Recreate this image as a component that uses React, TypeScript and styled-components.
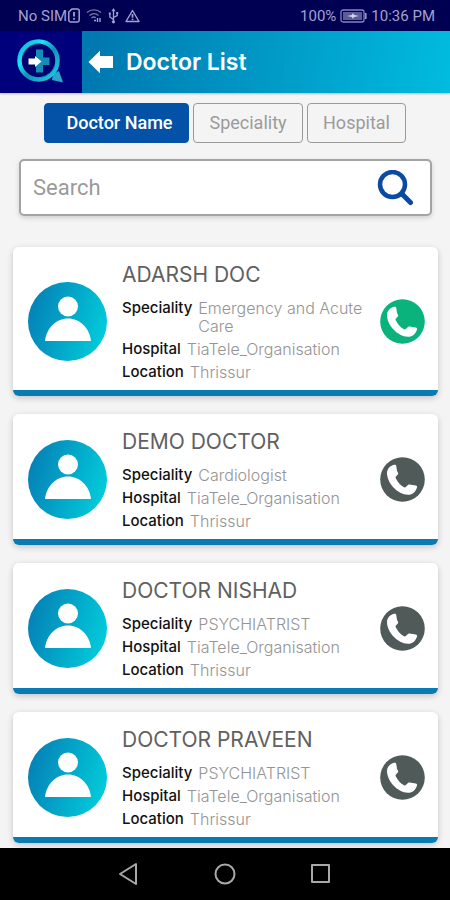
import React, { useState } from "react";
import styled, { createGlobalStyle } from "styled-components";

const GlobalStyle = createGlobalStyle`
  *, *::before, *::after { box-sizing: border-box; }
  body { margin: 0; background: #f4f4f4; }
  button, input { font: inherit; }
  h1, h2, p, dl, dd, dt, ul { margin: 0; padding: 0; }
  svg { display: block; flex: none; }
`;

const brandFont = `Inter, "Open Sans", sans-serif`;
const systemFont = `Roboto, "Liberation Sans", sans-serif`;

const Screen = styled.div`
  display: flex;
  flex-direction: column;
  min-height: 100vh;
  background: #f4f4f4;
  font-family: ${brandFont};
`;

const StatusBar = styled.div`
  display: flex;
  align-items: center;
  justify-content: space-between;
  height: 31px;
  padding: 0 15px 0 18px;
  background: #000052;
  color: #a3a1cf;
  font-family: ${systemFont};
  font-size: 15px;
  line-height: 20px;
`;

const StatusGroup = styled.div<{ $gap: number }>`
  display: flex;
  align-items: center;
  gap: ${(p) => p.$gap}px;
`;

const Header = styled.header`
  display: flex;
  height: 62px;
  background: linear-gradient(100deg, #0078b0 20%, #00bcde 100%);
  box-shadow: 0 1px 2px rgba(0, 0, 0, 0.25);
`;

const LogoTile = styled.div`
  display: flex;
  align-items: center;
  justify-content: center;
  width: 82px;
  background: #00007c;
`;

const BackButton = styled.button`
  display: flex;
  align-items: center;
  padding: 0 6px;
  border: 0;
  background: none;
  cursor: pointer;
`;

const Title = styled.h1`
  align-self: center;
  padding-left: 6px;
  color: #fff;
  font-size: 23px;
  font-weight: 600;
  line-height: 28px;
`;

const Tabs = styled.div`
  display: grid;
  grid-template-columns: 145fr 110fr 99fr;
  gap: 4px;
  margin: 10px 44px 0;
`;

const Tab = styled.button<{ $active: boolean }>`
  height: 40px;
  padding: ${(p) => (p.$active ? "0 0 0 6px" : "0")};
  border: 1px solid ${(p) => (p.$active ? "#0352a8" : "#999")};
  border-radius: 4px;
  background: ${(p) => (p.$active ? "#0352a8" : "transparent")};
  color: ${(p) => (p.$active ? "#fff" : "#9b9b9b")};
  font-family: ${systemFont};
  font-size: 18px;
  font-weight: ${(p) => (p.$active ? 500 : 400)};
  line-height: 20px;
  white-space: nowrap;
  cursor: pointer;
`;

const SearchBox = styled.form`
  display: flex;
  align-items: center;
  height: 57px;
  margin: 16px 18px 0 19px;
  padding: 0 17px 0 12px;
  border: 2px solid #a4a4a4;
  border-radius: 5px;
  background: #fff;
  box-shadow: 0 2px 5px rgba(0, 0, 0, 0.15);
`;

const SearchInput = styled.input`
  flex: 1;
  min-width: 0;
  padding: 0;
  border: 0;
  outline: 0;
  background: none;
  color: #444;
  font-family: ${systemFont};
  font-size: 22px;
  &::placeholder { color: #9a9a9a; opacity: 1; }
`;

const IconButton = styled.button`
  flex: none;
  padding: 0;
  border: 0;
  border-radius: 50%;
  background: none;
  cursor: pointer;
`;

const List = styled.ul`
  display: flex;
  flex: 1;
  flex-direction: column;
  gap: 18px;
  padding: 31px 12px 5px 13px;
  list-style: none;
`;

const Card = styled.li`
  display: flex;
  align-items: center;
  gap: 15px;
  padding: 14px 13px 15px 15px;
  border-radius: 6px;
  background: linear-gradient(to top, #087bb3 6px, #fff 6px);
  box-shadow: 0 2px 6px rgba(0, 0, 0, 0.2);
`;

const Info = styled.div`
  flex: 1;
  min-width: 0;
  padding-top: 2px;
`;

const DoctorName = styled.h2`
  margin-bottom: 12px;
  color: #606060;
  font-size: 21px;
  font-weight: 400;
  line-height: 24px;
`;

const Details = styled.dl`
  display: grid;
  gap: 5px;
`;

const Detail = styled.div`
  display: flex;
  gap: 6px;
  line-height: 18px;
`;

const Label = styled.dt`
  color: #111;
  font-size: 15px;
  font-weight: 500;
`;

const Value = styled.dd`
  min-width: 0;
  color: #949494;
  font-size: 16px;
  font-weight: 300;
`;

const NavBar = styled.nav`
  display: flex;
  align-items: center;
  justify-content: center;
  gap: 72px;
  height: 52px;
  background: #000;
`;

const SimIcon = () => (
  <svg width="12" height="15" viewBox="0 0 12 15" fill="none" stroke="#a3a1cf" strokeWidth="1.5">
    <path d="M4 1h5.5a1.7 1.7 0 0 1 1.7 1.7v9.6A1.7 1.7 0 0 1 9.5 14h-7A1.7 1.7 0 0 1 .8 12.300V4z" />
    <path d="M6 4v4.500M6 10v1.800" strokeWidth="1.800" />
  </svg>
);

const WifiIcon = () => (
  <svg width="16" height="15" viewBox="0 0 16 15" fill="none" stroke="#77759f" strokeWidth="1.400">
    <path d="M1 4.500C5 1 11 1 15 4.500M3.500 7.500c3-2.500 6-2.500 9 0M5.500 10c1.500-1.300 3-1.300 4.300-.2" />
    <path d="M8 12.500h2M11.500 10v4M14 10v4" stroke="#a3a1cf" />
  </svg>
);

const UsbIcon = () => (
  <svg width="11" height="16" viewBox="0 0 11 16" fill="none" stroke="#a3a1cf" strokeWidth="1.300">
    <path d="M5.500 2v11M5.500 11.500L1.800 9V6M5.500 9.500l3.700-2V5" />
    <path d="M5.500 0L3.500 3.200h4zM.8 4.500h2v2h-2zM8.200 4h2v2h-2z" fill="#a3a1cf" stroke="none" />
    <circle cx="5.500" cy="13.800" r="1.600" fill="#a3a1cf" stroke="none" />
  </svg>
);

const WarningIcon = () => (
  <svg width="15" height="14" viewBox="0 0 15 14" fill="none" stroke="#a3a1cf" strokeWidth="1.400">
    <path d="M7.500 1.500L14 12.500H1z" strokeLinejoin="round" />
    <path d="M7.500 5v3.800M7.500 9.800v1.500" strokeWidth="1.700" />
  </svg>
);

const BatteryIcon = () => (
  <svg width="27" height="14" viewBox="0 0 27 14" fill="none">
    <rect x="1" y="1" width="23" height="12" rx="2" stroke="#8683b8" strokeWidth="1.300" />
    <rect x="3" y="3" width="19" height="8" fill="#5d5a98" />
    <path d="M7 7l5-1 .8-2 1.400 2L19 7l-5 1-1.200 2-.8-2z" fill="#d8d7ef" />
    <path d="M25.800 4v6" stroke="#a3a1cf" strokeWidth="1.500" />
  </svg>
);

const Logo = () => (
  <svg width="48" height="46" viewBox="0 0 48 46" fill="none" role="img" aria-label="TiaTele">
    <defs>
      <linearGradient id="ring" x1="0" y1="0" x2="1" y2="1">
        <stop offset="0" stopColor="#12a8cc" />
        <stop offset=".3" stopColor="#1ce5f6" />
        <stop offset=".55" stopColor="#128fb8" />
        <stop offset="1" stopColor="#1bd5ec" />
      </linearGradient>
    </defs>
    <path d="M35 41l1-6 6-3 4 11.500z" fill="#26a8ce" />
    <circle cx="21.500" cy="21.500" r="19" fill="#00006e" stroke="url(#ring)" strokeWidth="4.500" />
    <path d="M5.500 17A17 17 0 0 1 24 4.800M38 26A17 17 0 0 1 24 38.300" stroke="#087da6" strokeWidth="1" />
    <path d="M19 10.500h7v8h6.500V26H26v7.500h-7z" fill="#168db8" />
    <path d="M11.500 19.500H18V17l6.500 5.500L18 28v-2.500h-6.500z" fill="#fff" />
  </svg>
);

const BackIcon = () => (
  <svg width="26" height="24" viewBox="0 0 26 24" fill="#fff">
    <path d="M.5 12L12 .8V6h13v12H12v5.200z" />
  </svg>
);

const SearchIcon = () => (
  <svg width="36" height="36" viewBox="0 0 36 36" fill="none" stroke="#0b4aa0">
    <circle cx="15.500" cy="14.500" r="12.500" strokeWidth="4.500" />
    <path d="M24.500 23.500l9 9" strokeWidth="5" strokeLinecap="round" />
  </svg>
);

const Avatar = () => (
  <svg width="79" height="79" viewBox="0 0 79 79">
    <defs>
      <linearGradient id="avatar" x1="0" y1=".3" x2="1" y2=".6">
        <stop offset="0" stopColor="#0480b6" />
        <stop offset="1" stopColor="#02cbda" />
      </linearGradient>
    </defs>
    <circle cx="39.500" cy="39.500" r="39.500" fill="url(#avatar)" />
    <circle cx="40" cy="24.500" r="10" fill="#fff" />
    <path d="M17 59c1.500-13 11-22.500 23-22.500S61.500 46 63 59z" fill="#fff" />
  </svg>
);

const PhoneIcon = ({ online }: { online: boolean }) => (
  <svg width="45" height="45" viewBox="0 0 45 45">
    <circle cx="22.500" cy="22.500" r="22.300" fill={online ? "#0bb37c" : "#505a59"} />
    <path
      d="M14 7.800c1.200-.4 2 0 2.200 1l.8 5c.1.800.6 1.400 1 2 .4.800.2 1.300-.4 1.900l-1.700 1.800c-.5.600-.4 1.200 0 2 2 3.900 4.700 6.900 8.100 8.700.8.400 1.300.3 1.800-.2l1.900-1.800c.5-.6 1-.8 1.800-.6l6.200.9c1.200.2 1.700.9 1.300 2-1.700 4.900-5 7.500-9 7.300C17.500 37.500 7 26 7 16c0-4 3-7 7-8.200z"
      fill="#fff"
    />
  </svg>
);

const NavIcon = ({ children }: { children: React.ReactNode }) => (
  <svg width="24" height="24" viewBox="0 0 24 24" fill="none" stroke="#a9a9a9" strokeWidth="2" strokeLinejoin="round">
    {children}
  </svg>
);

const doctors = [
  { name: "ADARSH DOC", speciality: "Emergency and Acute Care", online: true },
  { name: "DEMO DOCTOR", speciality: "Cardiologist", online: false },
  { name: "DOCTOR NISHAD", speciality: "PSYCHIATRIST", online: false },
  { name: "DOCTOR PRAVEEN", speciality: "PSYCHIATRIST", online: false },
];

const tabs = ["Doctor Name", "Speciality", "Hospital"];

export default function App() {
  const [active, setActive] = useState(tabs[0]);
  return (
    <Screen>
      <GlobalStyle />
      <StatusBar>
        <StatusGroup $gap={6}>
          <StatusGroup $gap={1}>
            <span>No SIM</span>
            <SimIcon />
          </StatusGroup>
          <WifiIcon />
          <UsbIcon />
          <WarningIcon />
        </StatusGroup>
        <StatusGroup $gap={4}>
          <span>100%</span>
          <BatteryIcon />
          <span>10:36 PM</span>
        </StatusGroup>
      </StatusBar>
      <Header>
        <LogoTile>
          <Logo />
        </LogoTile>
        <BackButton aria-label="Back">
          <BackIcon />
        </BackButton>
        <Title>Doctor List</Title>
      </Header>
      <Tabs>
        {tabs.map((t) => (
          <Tab key={t} $active={t === active} aria-pressed={t === active} onClick={() => setActive(t)}>
            {t}
          </Tab>
        ))}
      </Tabs>
      <SearchBox onSubmit={(e) => e.preventDefault()}>
        <SearchInput type="text" placeholder="Search" aria-label="Search" />
        <IconButton type="submit" aria-label="Search">
          <SearchIcon />
        </IconButton>
      </SearchBox>
      <List>
        {doctors.map((d) => (
          <Card key={d.name}>
            <Avatar />
            <Info>
              <DoctorName>{d.name}</DoctorName>
              <Details>
                <Detail>
                  <Label>Speciality</Label>
                  <Value>{d.speciality}</Value>
                </Detail>
                <Detail>
                  <Label>Hospital</Label>
                  <Value>TiaTele_Organisation</Value>
                </Detail>
                <Detail>
                  <Label>Location</Label>
                  <Value>Thrissur</Value>
                </Detail>
              </Details>
            </Info>
            <IconButton aria-label={`Call ${d.name}`}>
              <PhoneIcon online={d.online} />
            </IconButton>
          </Card>
        ))}
      </List>
      <NavBar>
        <IconButton aria-label="System back">
          <NavIcon>
            <path d="M19 2v20L3 12z" />
          </NavIcon>
        </IconButton>
        <IconButton aria-label="Home">
          <NavIcon>
            <circle cx="12" cy="12" r="9.500" />
          </NavIcon>
        </IconButton>
        <IconButton aria-label="Recent apps">
          <NavIcon>
            <rect x="3" y="3" width="17" height="17" />
          </NavIcon>
        </IconButton>
      </NavBar>
    </Screen>
  );
}
